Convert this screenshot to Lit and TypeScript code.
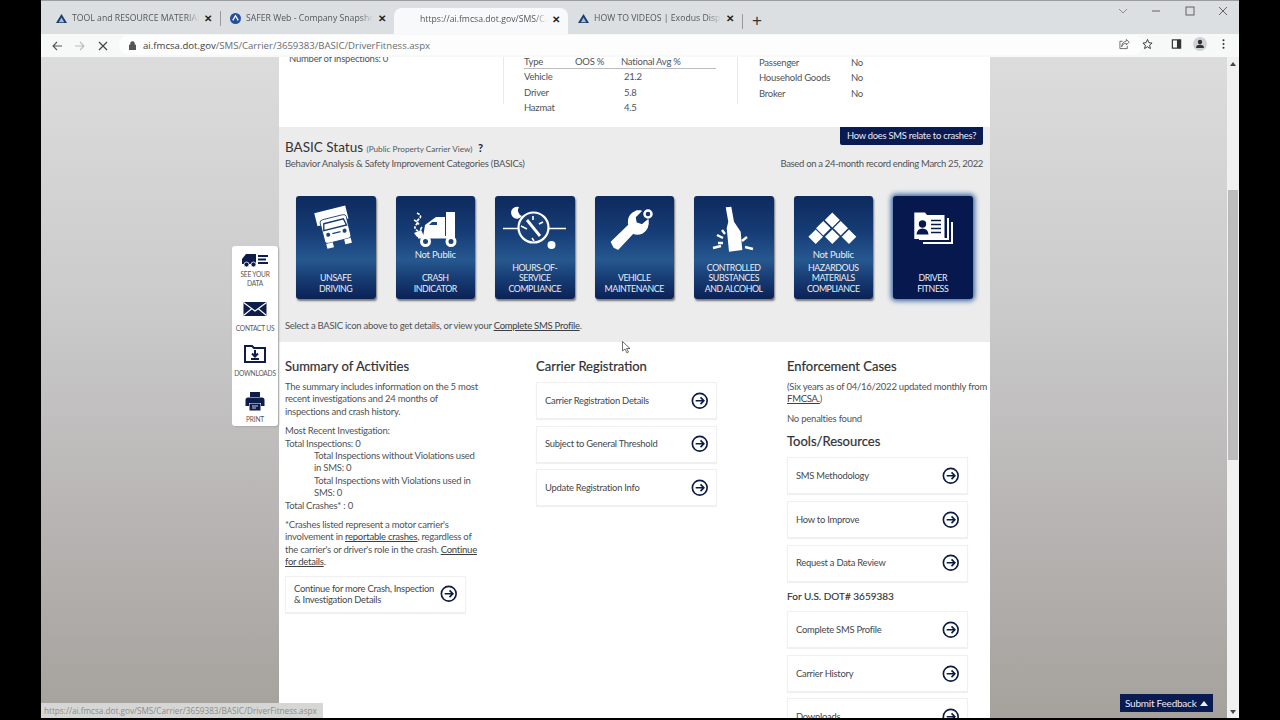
import { LitElement, html, css, svg } from "lit";
import { customElement } from "lit/decorators.js";

const arrow = html`<svg class="arrow" viewBox="0 0 18 18"><circle cx="9" cy="9" r="7.6" fill="none" stroke="#0b1b45" stroke-width="1.7"/><path d="M4.8 9H13M9.8 5.6 13.2 9l-3.4 3.4" fill="none" stroke="#0b1b45" stroke-width="1.7"/></svg>`;

const icons: Record<string, unknown> = {
  truck: svg`<g transform="translate(39 31) rotate(-14) scale(.84)"><path d="M-20-22H18V-6H-20Z" fill="#fff"/><path d="M-16-9Q-16-12-12-12H12Q16-12 16-9V14Q16 17 12 17H-12Q-16 17-16 14Z" fill="#fff" stroke="#163a70" stroke-width="1"/><path d="M-12-7H12L14 1H-14Z" fill="none" stroke="#163a70" stroke-width="1.6"/><circle cx="-10" cy="7" r="2.4" fill="#1c4478"/><circle cx="10" cy="7" r="2.4" fill="#1c4478"/><path d="M-5 7H5" stroke="#1c4478" stroke-width="1.5"/><path d="M-15 17H-7V23H-15ZM7 17H15V23H7Z" fill="#fff"/></g>`,
  crash: svg`<path d="M51 16H60V40H51ZM28 41 30 29 41 21H50V41Z" fill="#fff"/><path d="M37 26H42V29H34Z" fill="#1c4478"/><rect x="23" y="40" width="37" height="2.5" fill="#fff"/><circle cx="30.5" cy="45.5" r="4" fill="#1c4478" stroke="#fff" stroke-width="3"/><circle cx="56" cy="45.5" r="4" fill="#1c4478" stroke="#fff" stroke-width="3"/><path d="M22 17Q28 20 24 23T25 29M19 24Q24 26 21 29T23 35M27 31Q24 35 27 38" fill="none" stroke="#fff" stroke-width="1.7" stroke-dasharray="3 1"/><path d="M19 37 26 34 29 40 22 41Z" fill="#fff"/>`,
  clock: svg`<path d="M8 32.5H71" stroke="#fff" stroke-width="1.6"/><circle cx="38.5" cy="31.5" r="15" fill="#1a3f75" stroke="#fff" stroke-width="2.2"/><path d="M32 24 45 40" stroke="#fff" stroke-width="2.8"/><path d="M26 30 32 33M38 20V24M48 26 44 28M37 42 39 45" stroke="#fff" stroke-width="1.6"/><circle cx="56.5" cy="49" r="4" fill="#fff"/><path d="M24 11A6 6 0 1 0 27 20 6 6 0 0 1 24 11Z" fill="#fff"/>`,
  wrench: svg`<path d="M20 51 17.500 46 35 29Q33 19 43 15L47 15 41 21 42 27 48 29 54 24Q55 33 48 37 43 39 39 37L24 53Z" fill="#fff" stroke="#fff" stroke-width="1.500" stroke-linejoin="round"/><circle cx="54" cy="18" r="3.500" fill="none" stroke="#fff" stroke-width="2.500"/>`,
  bottle: svg`<path d="M31.700 11.300 37.300 10.700 40 25.700 46.700 35.700 48.300 54 35 55.700 32.700 32.300 34.300 25.700Z" fill="#fff"/><path d="M23 39 29 42M28 34 31 38M19 52 27 50M24 47 29 47M53 41 48 45M51 51 59 53" stroke="#fff" stroke-width="2.400"/>`,
  diamonds: svg`<path fill="#fff" d="M39.300 16.500 46.800 24 39.300 31.500 31.800 24ZM30.300 25 37.600 32.300 30.300 39.600 23 32.300ZM47.700 25 55 32.300 47.700 39.600 40.400 32.300ZM22.700 33.400 30 40.700 22.700 48 15.400 40.700ZM39.300 33.400 46.600 40.700 39.300 48 32 40.700ZM56 33.400 63.300 40.700 56 48 48.700 40.700Z"/>`,
  driver: svg`<path d="M30 46H58V26H60V48H30ZM26 42H54V22H56V44H26Z" fill="#fff"/><path d="M21.300 16.500H32L34 19H51.500V43H21.300Z" fill="#fff"/><circle cx="29.500" cy="28" r="3.700" fill="#07184f"/><path d="M23.500 38.500Q24 32.500 29.500 32.500T35.500 38.500Z" fill="#07184f"/><path d="M38 24.500H48M38 28.500H48M38 32.500H48M38 36.500H48" stroke="#07184f" stroke-width="1.300"/>`,
};

const tiles = [
  { icon: "truck", label: ["UNSAFE", "DRIVING"] },
  { icon: "crash", np: true, label: ["CRASH", "INDICATOR"] },
  { icon: "clock", label: ["HOURS-OF-", "SERVICE", "COMPLIANCE"] },
  { icon: "wrench", label: ["VEHICLE", "MAINTENANCE"] },
  { icon: "bottle", label: ["CONTROLLED", "SUBSTANCES", "AND ALCOHOL"] },
  { icon: "diamonds", np: true, label: ["HAZARDOUS", "MATERIALS", "COMPLIANCE"] },
  { icon: "driver", sel: true, label: ["DRIVER", "FITNESS"] },
];

const tabIcon = (kind: string) =>
  kind === "tri"
    ? html`<svg class="fav" viewBox="0 0 12 12"><path d="M6 1 12 11H0Z" fill="#1d3b6e"/><path d="M6 5 9 10H3Z" fill="#9fc0da"/></svg>`
    : html`<svg class="fav" viewBox="0 0 12 12"><circle cx="6" cy="6" r="6" fill="#254f96"/><path d="M3 8 6 3 9 8" fill="none" stroke="#fff" stroke-width="1.400"/></svg>`;

@customElement("app-root")
export class AppRoot extends LitElement {
  static styles = css`
    :host { display: block; width: 1280px; height: 720px; background: #000; overflow: hidden; font-family: "Lato", "Liberation Sans", sans-serif; }
    .win { margin-left: 41px; width: 1198px; height: 718px; display: flex; flex-direction: column; position: relative; overflow: hidden; }
    .tabbar { height: 34px; flex: none; background: #dcdfe2; border-top: 1px solid #9a9c9e; box-sizing: border-box; display: flex; align-items: flex-end; font: 8.700px "Open Sans", sans-serif; color: #54575b; padding-left: 5px; }
    .tab { width: 174px; height: 26px; flex: none; display: flex; align-items: center; padding: 0 6px 6px 10px; box-sizing: border-box; gap: 5px; position: relative; }
    .tab + .tab::before { content: ""; position: absolute; left: 0; top: 3px; height: 15px; width: 1px; background: #999; }
    .tab span { flex: 1; white-space: nowrap; overflow: hidden; -webkit-mask-image: linear-gradient(90deg, #000 90%, transparent); }
    .tab.active { background: #f8f9fa; border-radius: 8px 8px 0 0; padding-left: 26px; padding-right: 6px; padding-bottom: 4px; }
    .tab.active::before, .tab.active + .tab::before { display: none; }
    .tab b { font: 700 10px "Liberation Sans", sans-serif; color: #222; width: 10px; }
    .fav { width: 11px; height: 11px; flex: none; }
    .plus { font: 300 17px "Liberation Sans", sans-serif; color: #333; padding-left: 9px; border-left: 1px solid #999; height: 15px; line-height: 13px; margin-bottom: 5px; }
    .winbtns { margin-left: auto; align-self: flex-start; display: flex; gap: 23.500px; padding: 5px 11px 0 0; }
    .winbtns svg { width: 10px; height: 10px; }
    .toolbar { height: 23px; flex: none; background: #f7f8f8; display: flex; align-items: center; font: 9.600px "Open Sans", sans-serif; color: #3d4043; position: relative; }
    .nav { width: 10px; height: 10px; margin-left: 11px; flex: none; }
    .nav + .nav { margin-left: 13px; }
    .omni { position: absolute; left: 78px; width: 1024px; height: 20px; top: 1px; background: #fdfdfe; border-radius: 10px; display: flex; align-items: center; gap: 7px; padding-left: 10px; box-sizing: border-box; white-space: nowrap; }
    .omni em { font-style: normal; color: #6a6d71; }
    .omni svg { width: 7px; height: 9px; }
    .tools { position: absolute; right: 10px; top: 4px; display: flex; gap: 12px; align-items: center; }
    .tools svg { width: 11px; height: 12px; }
    .tools .avatar { width: 14px; height: 14px; margin: -1px; }
    .tools .panel { margin-left: 6px; }
    .view { flex: 1; position: relative; display: flex; background: linear-gradient(180deg, #dcdcdc 0%, #cbcbcb 37%, #bbb8b8 64%, #a5a19c 100%); overflow: hidden; }
    .page { width: 711px; margin-left: 238px; flex: none; background: #fff; color: #505358; font-size: 9.5px; line-height: 12.400px; letter-spacing: -.24px; }
    .top { height: 70px; display: flex; overflow: hidden; }
    .inspect { width: 224px; padding: 0 0 0 10px; margin-top: -4px; box-sizing: border-box; }
    .rates { width: 235px; height: 47px; border-left: 1px solid #e9e9e9; border-right: 1px solid #e9e9e9; padding-left: 20px; box-sizing: border-box; }
    .rates .row:first-child { margin-top: -1px; }
    .row { display: flex; height: 15.300px; align-items: center; flex: none; }
    .row i { font-style: normal; width: 51px; }
    .row i + i { width: 45px; }
    .row i + i + i { padding-left: 4px; }
    .row.h { border-bottom: 1px solid #bdbdbd; width: 192px; height: 12px; margin-bottom: 1px; }
    .row.h i:last-child { width: 90px; padding-left: 0; }
    .row.h i + i { width: 46px; }
    .carrier { padding: 0 0 0 21px; margin-top: -1.500px; }
    .carrier .row i { width: 92px; }
    .basic { height: 215px; background: #ececec; padding: 0 7px 0 6px; box-sizing: border-box; display: flex; flex-direction: column; }
    .bhead { display: flex; align-items: flex-start; height: 31px; }
    .bhead h2 { margin: 13px 0 0; font-size: 13.500px; font-weight: 400; color: #333; line-height: 14px; letter-spacing: 0; }
    .bhead h2 small { font-size: 8.200px; color: #55585c; }
    .bhead h2 b { font-size: 11px; color: #222; margin-left: 2px; }
    .how { margin-left: auto; background: #0a1b52; color: #e8ecf5; font-size: 9.400px; height: 18px; line-height: 17px; width: 143px; text-align: center; border-radius: 0 0 2px 2px; white-space: nowrap; }
    .sub { display: flex; justify-content: space-between; height: 38px; }
    .sub span + span { letter-spacing: -.33px; }
    .tiles { display: flex; gap: 20px; padding-left: 11px; }
    .tile { width: 79.500px; height: 103px; flex: none; border-radius: 3px; position: relative; color: #e9eef6; box-shadow: 1px 2px 2px #777; background: linear-gradient(180deg, #0d2a5e 0%, #163c75 35%, #265890 62%, #173c73 80%, #0b2256 100%); display: flex; flex-direction: column; align-items: center; font-size: 8.800px; line-height: 10.500px; letter-spacing: -.42px; padding-bottom: 5px; box-sizing: border-box; text-align: center; }
    .tile.sel { background: #07184f; box-shadow: 0 0 5px 2px #3b6aa6; }
    .tile svg { width: 80px; height: 54px; flex: none; overflow: visible; }
    .np { font-size: 9.500px; letter-spacing: -.24px; }
    .lab { margin-top: auto; }
    .selnote { margin-top: 21px; letter-spacing: -.27px; }
    a { color: #3c3f44; text-decoration: underline; }
    .cols { display: flex; padding: 17px 0 0 6px; height: 400px; }
    .col1 { width: 251px; flex: none; }
    .col2 { width: 251px; flex: none; }
    .col3 { flex: 1; }
    h3 { margin: 0 0 8px; font-size: 13px; font-weight: 400; color: #2f3134; line-height: 14px; letter-spacing: 0; -webkit-text-stroke: .2px #2f3134; }
    h3.gap { margin-bottom: 9px; }
    h3.after { margin-top: 9px; }
    h4 { margin: 7px 0 8.500px; font-size: 10px; font-weight: 400; line-height: 14px; color: #33353a; letter-spacing: 0; -webkit-text-stroke: .15px #33353a; }
    p { margin: 0 0 7px; width: 196px; }
    p.wide { width: 205px; }
    .indent { display: block; padding-left: 29px; }
    .card { width: 181px; height: 37px; margin-bottom: 6.700px; box-sizing: border-box; border: 1px solid #f0f0f0; box-shadow: 0 1px 1px #f0f0f0; display: flex; align-items: center; justify-content: space-between; padding: 0 8px; color: #44474c; font-size: 9.400px; line-height: 11.500px; flex: none; }
    .arrow { width: 17.500px; height: 17.500px; flex: none; }
    .sidebar { position: absolute; left: 191px; top: 189px; width: 46px; height: 180px; background: #fff; border-radius: 3px; display: flex; flex-direction: column; align-items: center; color: #55585c; font-size: 6.600px; letter-spacing: -.2px; line-height: 9.200px; text-align: center; box-shadow: 1px 1px 2px #aaa; }
    .sitem { flex: none; height: 45px; display: flex; flex-direction: column; align-items: center; padding-top: 8px; box-sizing: border-box; width: 100%; white-space: nowrap; }
    .sitem svg { width: 26px; height: 20px; margin-bottom: 5.400px; flex: none; }
    .sitem.first { padding-top: 4px; }
    .sitem.first svg { margin-bottom: 0; }
    .sitem.last { padding-top: 9.500px; }
    .sitem.last svg { margin-bottom: 4px; }
    .status { position: absolute; left: 0; bottom: 0; width: 282px; height: 15px; padding-left: 3px; box-sizing: border-box; background: #d6d6d4; color: #8c8d8d; font: 8.200px/15px "Open Sans", sans-serif; white-space: nowrap; overflow: hidden; }
    .fb { position: absolute; left: 1079px; top: 637px; width: 93px; height: 18px; background: #0a1b52; color: #e8ecf5; font-size: 10px; letter-spacing: -.24px; line-height: 18px; padding-left: 5px; box-sizing: border-box; white-space: nowrap; }
    .fb::after { content: ""; position: absolute; right: 5px; top: 7px; border: 4px solid transparent; border-top: 0; border-bottom: 5px solid #eef; }
    .sb { position: absolute; right: 0; top: 0; bottom: 0; width: 12px; background: #f1f1f1; }
    .thumb { position: absolute; left: 1px; right: 1px; top: 133px; height: 270px; background: #bcbcbc; }
    .sb::before, .sb::after { content: ""; position: absolute; left: 3px; border: 3px solid transparent; }
    .sb::before { top: 5px; border-top: 0; border-bottom: 4px solid #444; }
    .sb::after { bottom: 4px; border-bottom: 0; border-top: 4px solid #444; }
    .cursor { position: absolute; left: 581px; top: 284px; width: 9px; height: 13px; }
  `;

  private tile(t: (typeof tiles)[number]) {
    return html`<div class="tile ${t.sel ? "sel" : ""}">
      <svg viewBox="0 0 80 54">${icons[t.icon]}</svg>
      ${t.np ? html`<div class="np">Not Public</div>` : ""}
      <div class="lab">${t.label.map((l) => html`${l}<br />`)}</div>
    </div>`;
  }

  private card(label: unknown) {
    return html`<div class="card"><span>${label}</span>${arrow}</div>`;
  }

  render() {
    return html`<div class="win">
      <div class="tabbar">
        <div class="tab">${tabIcon("tri")}<span>TOOL and RESOURCE MATERIALS</span><b>✕</b></div>
        <div class="tab">${tabIcon("c")}<span>SAFER Web - Company Snapshot</span><b>✕</b></div>
        <div class="tab active"><span>https://ai.fmcsa.dot.gov/SMS/Carrier/36</span><b>✕</b></div>
        <div class="tab">${tabIcon("tri")}<span>HOW TO VIDEOS | Exodus Dispatch</span><b>✕</b></div>
        <div class="plus">+</div>
        <div class="winbtns">
          <svg viewBox="0 0 10 10"><path d="M1 3 5 7 9 3" fill="none" stroke="#777" stroke-width=".8"/></svg>
          <svg viewBox="0 0 10 10"><path d="M1 5H9" stroke="#555" stroke-width=".9"/></svg>
          <svg viewBox="0 0 10 10"><rect x="1" y="1" width="8" height="8" fill="none" stroke="#555" stroke-width=".9"/></svg>
          <svg viewBox="0 0 10 10"><path d="M1 1 9 9M9 1 1 9" stroke="#555" stroke-width=".9"/></svg>
        </div>
      </div>
      <div class="toolbar">
        <svg class="nav" viewBox="0 0 10 10"><path d="M10 5H1M5 1 1 5 5 9" fill="none" stroke="#555" stroke-width="1.100"/></svg>
        <svg class="nav" viewBox="0 0 10 10"><path d="M0 5H9M5 1 9 5 5 9" fill="none" stroke="#bbb" stroke-width="1.100"/></svg>
        <svg class="nav" viewBox="0 0 10 10"><path d="M1 1 9 9M9 1 1 9" stroke="#444" stroke-width="1.200"/></svg>
        <div class="omni">
          <svg viewBox="0 0 7 9"><path d="M0 4H7V9H0ZM1.500 4V2.500A2 2 0 0 1 5.500 2.500V4" fill="#555" stroke="#555" stroke-width=".6"/></svg>
          <span>ai.fmcsa.dot.gov<em>/SMS/Carrier/3659383/BASIC/DriverFitness.aspx</em></span>
        </div>
        <div class="tools">
          <svg viewBox="0 0 12 12"><path d="M8 1 11 4 8 7V5.500Q4 5 3 9 3 4 8 2.800ZM9 8V11H1V3H4" fill="none" stroke="#555" stroke-width=".9"/></svg>
          <svg viewBox="0 0 12 12"><path d="M6 1 7.500 4.500 11 5 8.300 7.300 9.200 11 6 9 2.800 11 3.700 7.300 1 5 4.500 4.500Z" fill="none" stroke="#333" stroke-width="1"/></svg>
          <svg class="panel" viewBox="0 0 12 12"><rect x="1.500" y="1.500" width="9" height="9" fill="none" stroke="#333" stroke-width="1.300"/><rect x="6.500" y="1.500" width="4" height="9" fill="#333"/></svg>
          <svg class="avatar" viewBox="0 0 14 14"><circle cx="7" cy="7" r="7" fill="#cfd3d9"/><circle cx="7" cy="5" r="2.200" fill="#333"/><path d="M3 11Q3 7.800 7 7.800T11 11Z" fill="#333"/></svg>
          <svg viewBox="0 0 12 12"><circle cx="6" cy="2" r="1.100" fill="#333"/><circle cx="6" cy="6" r="1.100" fill="#333"/><circle cx="6" cy="10" r="1.100" fill="#333"/></svg>
        </div>
      </div>
      <div class="view">
        <div class="page">
          <div class="top">
            <div class="inspect">Number of Inspections: 0</div>
            <div class="rates">
              <div class="row h"><i>Type</i><i>OOS %</i><i>National Avg %</i></div>
              <div class="row"><i>Vehicle</i><i></i><i>21.2</i></div>
              <div class="row"><i>Driver</i><i></i><i>5.8</i></div>
              <div class="row"><i>Hazmat</i><i></i><i>4.5</i></div>
            </div>
            <div class="carrier">
              <div class="row"><i>Passenger</i><i>No</i></div>
              <div class="row"><i>Household Goods</i><i>No</i></div>
              <div class="row"><i>Broker</i><i>No</i></div>
            </div>
          </div>
          <div class="basic">
            <div class="bhead">
              <h2>BASIC Status <small>(Public Property Carrier View)</small> <b>?</b></h2>
              <div class="how">How does SMS relate to crashes?</div>
            </div>
            <div class="sub"><span>Behavior Analysis &amp; Safety Improvement Categories (BASICs)</span><span>Based on a 24-month record ending March 25, 2022</span></div>
            <div class="tiles">${tiles.map((t) => this.tile(t))}</div>
            <div class="selnote">Select a BASIC icon above to get details, or view your <a>Complete SMS Profile</a>.</div>
          </div>
          <div class="cols">
            <div class="col1">
              <h3>Summary of Activities</h3>
              <p>The summary includes information on the 5 most recent investigations and 24 months of inspections and crash history.</p>
              <p>Most Recent Investigation:<br />Total Inspections: 0<br />
                <span class="indent">Total Inspections without Violations used in SMS: 0</span>
                <span class="indent">Total Inspections with Violations used in SMS: 0</span>
                Total Crashes* : 0</p>
              <p>*Crashes listed represent a motor carrier's involvement in <a>reportable crashes</a>, regardless of the carrier's or driver's role in the crash. <a>Continue for details</a>.</p>
              ${this.card(html`Continue for more Crash, Inspection<br />&amp; Investigation Details`)}
            </div>
            <div class="col2">
              <h3 class="gap">Carrier Registration</h3>
              ${this.card("Carrier Registration Details")}
              ${this.card("Subject to General Threshold")}
              ${this.card("Update Registration Info")}
            </div>
            <div class="col3">
              <h3>Enforcement Cases</h3>
              <p class="wide">(Six years as of 04/16/2022 updated monthly from <a>FMCSA.</a>)</p>
              <p>No penalties found</p>
              <h3 class="gap after">Tools/Resources</h3>
              ${this.card("SMS Methodology")}
              ${this.card("How to Improve")}
              ${this.card("Request a Data Review")}
              <h4>For U.S. DOT# 3659383</h4>
              ${this.card("Complete SMS Profile")}
              ${this.card("Carrier History")}
              ${this.card("Downloads")}
            </div>
          </div>
        </div>
        <div class="sidebar">
          <div class="sitem first"><svg viewBox="0 0 26 20"><path d="M4 4H14V14H0V9ZM16 5H26V7H16ZM16 8.500H24V10.500H16ZM16 12H26V14H16Z" fill="#0c1d4c"/><circle cx="4.500" cy="14.500" r="2.500" fill="#0c1d4c" stroke="#fff" stroke-width=".8"/><circle cx="11.500" cy="14.500" r="2.500" fill="#0c1d4c" stroke="#fff" stroke-width=".8"/></svg><div>SEE YOUR<br />DATA</div></div>
          <div class="sitem"><svg viewBox="0 0 26 20"><rect x="1.500" y="3" width="23" height="14" fill="#0c1d4c"/><path d="M1.500 3.500 13 12 24.500 3.500M1.500 16.500 10 9.500M24.500 16.500 16 9.500" fill="none" stroke="#fff" stroke-width="1.100"/></svg><div>CONTACT US</div></div>
          <div class="sitem"><svg viewBox="0 0 26 20"><path d="M3 2H10L12 4H23V18H3Z" fill="none" stroke="#0c1d4c" stroke-width="2"/><path d="M13 6V12M10 9.500 13 12.500 16 9.500M9 15H17" fill="none" stroke="#0c1d4c" stroke-width="2"/></svg><div>DOWNLOADS</div></div>
          <div class="sitem last"><svg viewBox="0 0 26 20"><path d="M8 1H18V6H8Z" fill="#0c1d4c"/><path d="M6 6.500H20Q22.500 6.500 22.500 9V15H19V12H7V15H3.500V9Q3.500 6.500 6 6.500Z" fill="#0c1d4c"/><path d="M7.500 12.500H18.500V19.500H7.500Z" fill="#0c1d4c"/><path d="M10 15H16M10 17H14" stroke="#fff" stroke-width=".8"/></svg><div>PRINT</div></div>
        </div>
        <div class="sb"><div class="thumb"></div></div>
        <svg class="cursor" viewBox="0 0 9 13"><path d="M.5.500V10L3 8 5 12 6.500 11 4.500 7.500H8Z" fill="#fff" stroke="#333" stroke-width=".7"/></svg>
        <div class="status">https://ai.fmcsa.dot.gov/SMS/Carrier/3659383/BASIC/DriverFitness.aspx</div>
        <div class="fb">Submit Feedback</div>
      </div>
    </div>`;
  }
}
